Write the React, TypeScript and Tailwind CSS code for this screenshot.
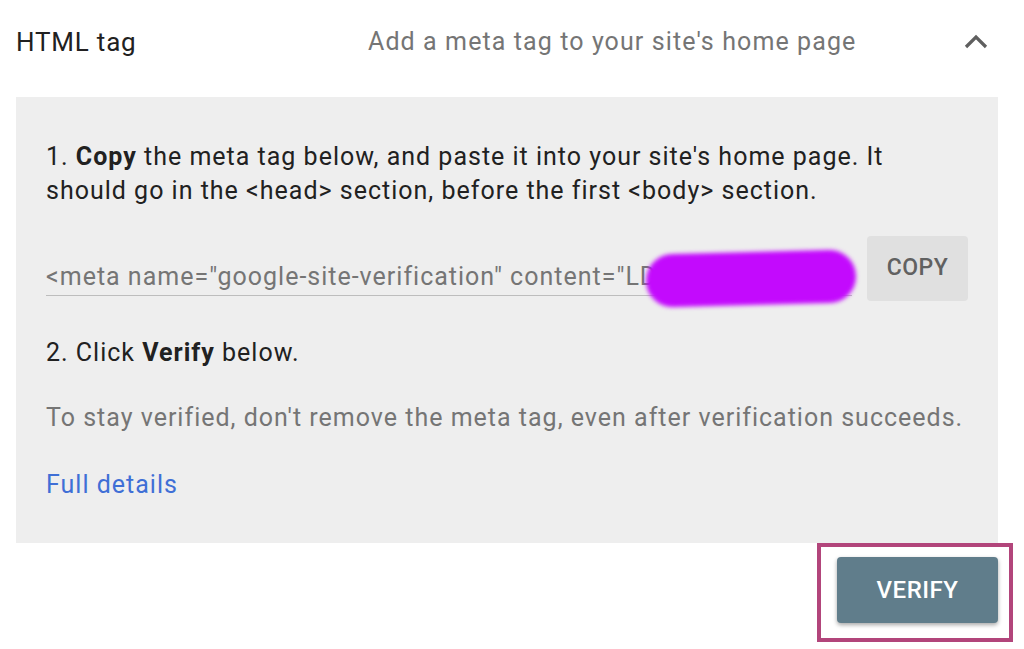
import React from "react";

export default function App() {
  return (
    <div
      className="w-[1024px] h-[649px] bg-white overflow-hidden text-[#212121]"
      style={{ fontFamily: "Roboto, 'Noto Sans', sans-serif" }}
    >
      {/* Header */}
      <div className="flex items-center pt-[26px] h-[58px]">
        <div className="w-[352px] pl-[16px] text-[26px] leading-[32px] tracking-[0.8px] text-[#212121]">HTML tag</div>
        <div className="pl-[16px] text-[25px] leading-[32px] tracking-[1.1px] text-[#757575]">Add a meta tag to your site's home page</div>
        <div className="ml-auto mr-[36px] flex items-center">
          <svg width="24" height="16" viewBox="0 0 24 16" fill="none">
            <polyline points="2,13 12,3 22,13" stroke="#5f5f5f" strokeWidth="3.2" strokeLinecap="butt" strokeLinejoin="miter" />
          </svg>
        </div>
      </div>

      {/* Panel */}
      <div className="mt-[39px] ml-[16px] w-[982px] bg-[#eeeeee] px-[30px] pt-[43px] pb-[41px] text-[25px] tracking-[1px]">
        <p className="leading-[34px] text-[#212121]">
          1. <span className="font-bold">Copy</span> the meta tag below, and paste it into your site's home page. It
          <br />
          should go in the &lt;head&gt; section, before the first &lt;body&gt; section.
        </p>

        <div className="mt-[28px] flex items-start gap-[15px]">
          <div className="relative flex-1 h-[65px]">
            <div className="mt-[26px] pb-[3px] border-b-[1.5px] border-[#bdbdbd] leading-[30px] text-[#757575] whitespace-nowrap overflow-hidden">
              &lt;meta name="google-site-verification" content="LD
            </div>
            <div className="absolute left-[600px] top-[16px] w-[210px] h-[53px] rounded-[30px] bg-[#c30afd] blur-[2px] rotate-[-1.5deg]" />
          </div>
          <button className="w-[101px] h-[65px] rounded-[4px] bg-[#e0e0e0] text-[#616161] text-[23px] font-medium tracking-[0.5px]">
            COPY
          </button>
        </div>

        <p className="mt-[35px] leading-[34px] text-[#212121]">
          2. Click <span className="font-bold">Verify</span> below.
        </p>

        <p className="mt-[31px] leading-[34px] text-[#757575]">
          To stay verified, don't remove the meta tag, even after verification succeeds.
        </p>

        <p className="mt-[33px] leading-[34px] text-[#3f6fd6]">Full details</p>
      </div>

      {/* Verify */}
      <div className="flex justify-end pr-[11px]">
        <div className="w-[196px] h-[99px] border-[4px] border-[#b2457b] pl-[16px] pt-[10px]">
          <button className="w-[161px] h-[66px] rounded-[4px] bg-[#607d8b] text-white text-[24px] font-medium tracking-[0.5px] shadow-[0_2px_4px_rgba(0,0,0,0.35)]">
            VERIFY
          </button>
        </div>
      </div>
    </div>
  );
}
